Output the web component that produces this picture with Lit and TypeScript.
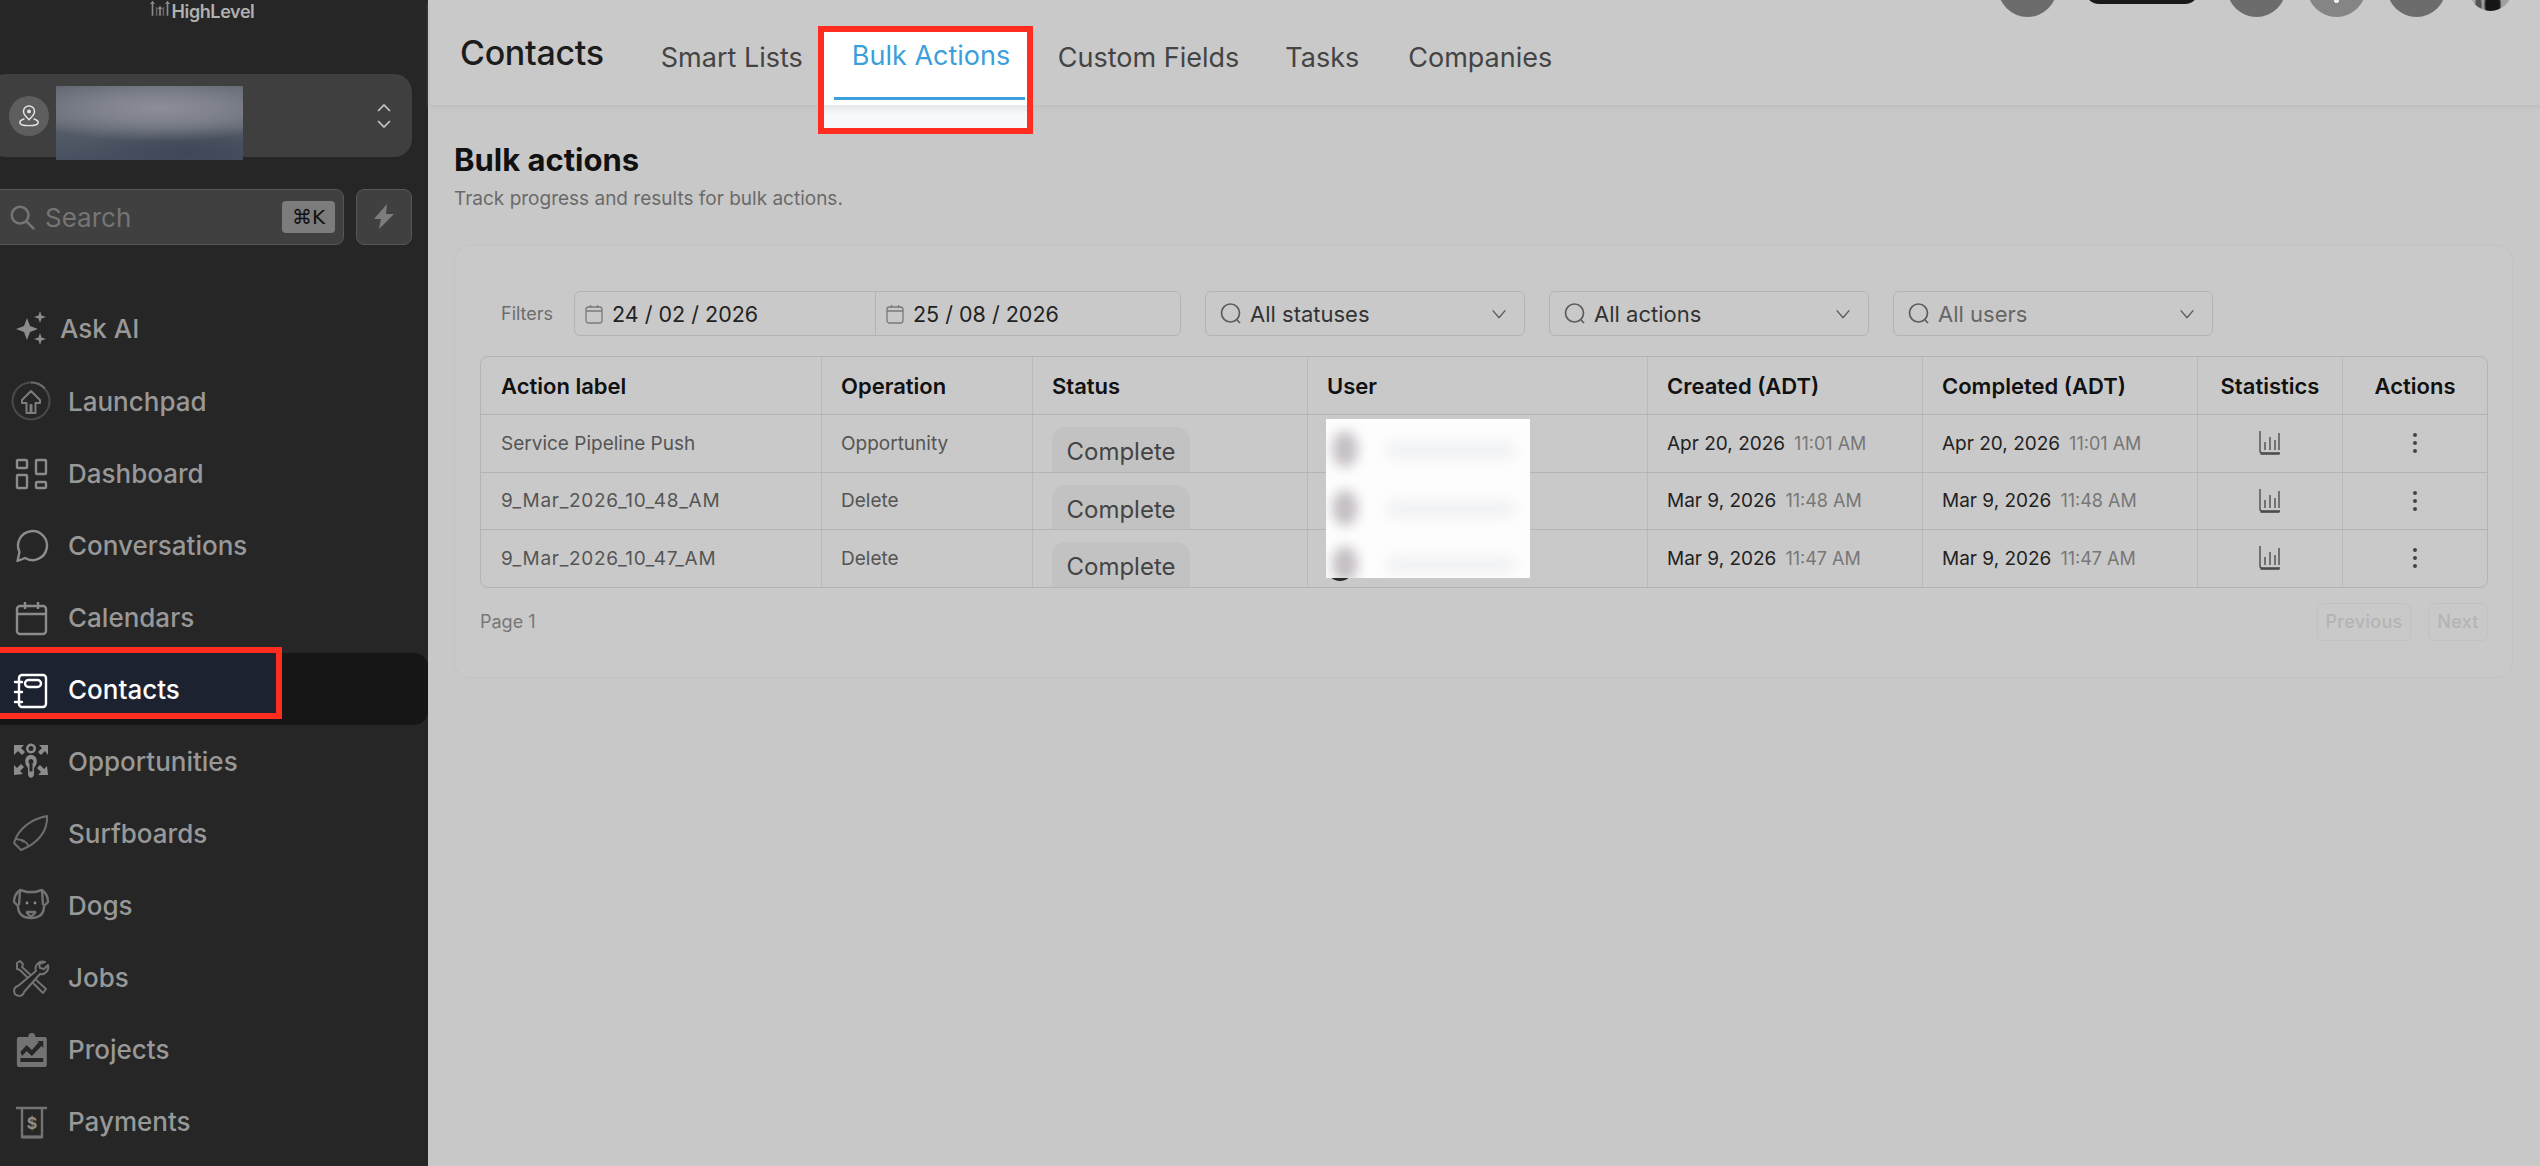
import { LitElement, html, css, svg } from "lit";
import { customElement } from "lit/decorators.js";

const icons: Record<string, unknown> = {
  launch: svg`<circle cx="18" cy="18" r="18.500" fill="none" stroke="#4a4a4a" stroke-width="2"/><path d="M18 -0.500a18.500 18.500 0 0 1 14 6" fill="none" stroke="#6a6a6a" stroke-width="2"/><path d="M18 8l-9 9v3h4.500v10h4v-8h1v8h4V20H27v-3z" fill="none" stroke="#7d7d7d" stroke-width="2" stroke-linejoin="round"/>`,
  dash: svg`<g fill="none" stroke="#8c8c8c" stroke-width="2.400"><rect x="4" y="5" width="10" height="8" rx="1"/><rect x="23" y="5" width="10" height="14" rx="1"/><rect x="4" y="20" width="10" height="13" rx="1"/><rect x="23" y="27" width="10" height="6" rx="1"/></g>`,
  chat: svg`<path d="M4.500 34L6.500 25A14.500 14.500 0 1 1 12 31z" fill="none" stroke="#8c8c8c" stroke-width="2.400" stroke-linejoin="round"/>`,
  cal: svg`<g fill="none" stroke="#8c8c8c" stroke-width="2.400"><rect x="4" y="7" width="29" height="28" rx="3"/><path d="M4 15h29M12 3v7M25 3v7"/></g>`,
  contacts: svg`<g fill="none" stroke="#fff" stroke-width="2.400" stroke-linecap="round" stroke-linejoin="round"><rect x="6" y="4" width="27" height="32" rx="3"/><rect x="12" y="9" width="16" height="7" rx="3.500"/><path d="M2 11h7M2 21h7M2 31h7"/></g>`,
  opp: svg`<g fill="#8c8c8c"><path d="M1 3h10l-3 3 4 4-3 3-4-4-4 4zM35 3v10l-3-4-4 4-3-3 4-4-3-3zM1 33V23l3 3 4-4 3 3-4 4 3 3zM35 33H25l3-3-4-4 3-3 4 4 3-3z" transform="translate(0 -1)"/><path d="M18 0.500a5 5 0 1 0 .01 0zm0 2.500a2.500 2.500 0 1 1-.01 0zM18 12c-5 0-7 5-5 10l2 3v6c0 5 6 5 6 0v-6l2-3c2-5 0-10-5-10zm0 4a2.500 2.500 0 0 1 1.500 4.500v8h-3v-8a2.500 2.500 0 0 1 1.500-4.500z" fill-rule="evenodd"/></g>`,
  surf: svg`<g fill="none" stroke="#6e6e6e" stroke-width="2" stroke-linejoin="round"><path d="M8 35L1 28C5 14 18 4 34 1c1 14-8 27-26 34z"/><path d="M3 24c8 1 11 3 13 8"/></g><circle cx="10" cy="26" r="1.500" fill="#6e6e6e"/>`,
  dog: svg`<g fill="none" stroke="#737373" stroke-width="2.400" stroke-linejoin="round"><path d="M7 3l7 2h8l7-2c4 3 6 8 6 12l-4 4c0 8-5 12-13 12S5 27 5 19l-4-4c0-4 2-9 6-12z"/><path d="M7 3l-1 15M29 3l1 15"/><path d="M14 25h8v1l-4 4-4-4z"/></g><circle cx="14" cy="16" r="1.400" fill="#8c8c8c"/><circle cx="22" cy="16" r="1.400" fill="#8c8c8c"/>`,
  jobs: svg`<g fill="none" stroke="#737373" stroke-width="2" stroke-linejoin="round"><path d="M4 4l3-2 3 3-1 3 24 22-3 4L7 11l-3-1z"/><path d="M32 3a7 7 0 0 0-9 9L5 27a5 5 0 1 0 6 6l16-18a7 7 0 0 0 8-9l-4 4-4-1-1-4z" fill="#262626"/></g>`,
  proj: svg`<path fill-rule="evenodd" fill="#737373" transform="translate(3 1) scale(.88 1)" d="M3 5h11a4 4 0 0 1 8 0h11a2 2 0 0 1 2 2v26a2 2 0 0 1-2 2H3a2 2 0 0 1-2-2V7a2 2 0 0 1 2-2zM5 26v4h26v-4zM5 20l7-7 6 5 8-8-2-1h7v7l-2-2-11 10-6-5-5 5z"/>`,
  pay: svg`<g fill="none" stroke="#737373" stroke-width="2.400"><path d="M3 5h31M9 5v29h20V5"/><path d="M9 34h20" stroke-width="3"/></g><text x="19" y="26" text-anchor="middle" font-family="Inter, sans-serif" font-size="16" font-weight="700" fill="#8c8c8c">$</text>`,
};

const navItems = [
  { label: "Launchpad", icon: "launch" },
  { label: "Dashboard", icon: "dash" },
  { label: "Conversations", icon: "chat" },
  { label: "Calendars", icon: "cal" },
  { label: "Contacts", icon: "contacts", active: true },
  { label: "Opportunities", icon: "opp" },
  { label: "Surfboards", icon: "surf" },
  { label: "Dogs", icon: "dog" },
  { label: "Jobs", icon: "jobs" },
  { label: "Projects", icon: "proj" },
  { label: "Payments", icon: "pay" },
];

const rows = [
  { label: "Service Pipeline Push", op: "Opportunity", date: "Apr 20, 2026", time: "11:01 AM" },
  { label: "9_Mar_2026_10_48_AM", op: "Delete", date: "Mar 9, 2026", time: "11:48 AM" },
  { label: "9_Mar_2026_10_47_AM", op: "Delete", date: "Mar 9, 2026", time: "11:47 AM" },
];

const searchIcon = html`<svg class="q" viewBox="0 0 24 24" fill="none" stroke="#5c5c5c" stroke-width="1.700"><circle cx="11.500" cy="11" r="9"/><path d="M18 18l3 3"/></svg>`;
const chevron = html`<svg class="chev" viewBox="0 0 20 12" fill="none" stroke="#5c5c5c" stroke-width="1.600"><path d="M3 2l7 8 7-8"/></svg>`;
const calIcon = html`<svg class="cal" viewBox="0 0 18 20" fill="none" stroke="#7a7a7a" stroke-width="1.300"><rect x="1" y="3" width="16" height="16" rx="2.500"/><path d="M1 7h16M5.500 1v3M12.500 1v3"/></svg>`;

@customElement("app-root")
export class AppRoot extends LitElement {
  static styles = css`
    :host {
      display: flex;
      width: 2540px;
      height: 1166px;
      overflow: hidden;
      background: #c8c8c8;
      font-family: Inter, "Liberation Sans", sans-serif;
    }
    .side {
      width: 428px;
      flex: none;
      background: #262626;
      display: flex;
      flex-direction: column;
      overflow: hidden;
    }
    .logo {
      height: 74px;
      display: flex;
      justify-content: center;
      align-items: flex-start;
      gap: 2px;
      padding-right: 24px;
      font-size: 18px;
      line-height: 23px;
      font-weight: 600;
      letter-spacing: -0.4px;
      color: #b0b0b0;
    }
    .logo svg { width: 20px; height: 18px; }
    .loc {
      height: 83px;
      margin-left: -12px;
      margin-right: 16px;
      border-radius: 18px;
      background: #3f3f3f;
      display: flex;
      align-items: center;
      position: relative;
      padding-left: 21px;
    }
    .pin {
      width: 40px;
      height: 40px;
      border-radius: 50%;
      background: #5e5e5e;
      display: grid;
      place-items: center;
    }
    .pin svg { width: 22px; height: 22px; }
    .blur {
      position: absolute;
      left: 68px;
      top: 12px;
      width: 187px;
      height: 74px;
      background:
        radial-gradient(ellipse 80% 45% at 55% 30%, #8b8e96 0%, #7f828b 40%, transparent 100%),
        radial-gradient(ellipse 60% 40% at 70% 90%, #3f4858 0%, transparent 100%),
        linear-gradient(180deg, #5f646f 0%, #666a75 40%, #535a67 65%, #475060 100%);
    }
    .updown { margin-left: auto; margin-right: 20px; width: 16px; height: 26px; }
    .search-row {
      display: flex;
      gap: 12px;
      margin: 32px 16px 0 -12px;
      height: 56px;
    }
    .search {
      flex: 1;
      border: 1px solid #565656;
      border-radius: 8px;
      background: #404040;
      display: flex;
      align-items: center;
      padding-left: 20px;
      gap: 10px;
      font-size: 26px;
      color: #757575;
    }
    .search svg { width: 26px; height: 26px; }
    kbd {
      margin-left: auto;
      margin-right: 8px;
      width: 53px;
      height: 32px;
      border-radius: 4px;
      background: #7c7c7c;
      color: #111;
      font: 20px "DejaVu Sans", sans-serif;
      display: grid;
      place-items: center;
    }
    .bolt {
      width: 56px;
      flex: none;
      box-sizing: border-box;
      border: 1px solid #565656;
      border-radius: 8px;
      background: #404040;
      display: grid;
      place-items: center;
    }
    .bolt svg { width: 24px; height: 26px; }
    .ask {
      margin-top: 63px;
      height: 40px;
      display: flex;
      align-items: center;
      padding-left: 13px;
      gap: 13px;
      font-size: 26px;
      font-weight: 500;
      color: #989898;
    }
    .ask svg { width: 34px; height: 34px; }
    .nav { margin-top: 17px; display: flex; flex-direction: column; }
    .item {
      height: 72px;
      display: flex;
      align-items: center;
      padding-left: 13px;
      gap: 19px;
      font-size: 26px;
      font-weight: 500;
      color: #989898;
      position: relative;
      border-radius: 0 14px 14px 0;
    }
    .item svg { width: 36px; height: 36px; flex: none; overflow: visible; }
    .item.active { background: #161616; color: #fff; }
    .item.active::before {
      content: "";
      position: absolute;
      left: -6px;
      top: 0;
      width: 282px;
      height: 60px;
      background: #1c2230;
    }
    .item span, .item svg { position: relative; z-index: 1; }
    .side-mark {
      position: absolute;
      left: -6px;
      top: -6px;
      width: 288px;
      height: 72px;
      box-sizing: border-box;
      border: 6px solid #ff2d1f;
      z-index: 2;
    }

    .main { flex: 1; min-width: 0; display: flex; flex-direction: column; margin-left: 2px; }
    .top {
      height: 105px;
      flex: none;
      display: flex;
      align-items: flex-start;
      background: #c9c9c9;
      box-shadow: 0 2px 4px #bdbdbd;
      padding-left: 30px;
      position: relative;
    }
    .title {
      font-size: 34px;
      font-weight: 500;
      line-height: 44px;
      margin-top: 31px;
      color: #1c1c1c;
      letter-spacing: -0.3px;
    }
    .tabs { display: flex; margin-left: 57px; }
    .tab {
      margin: 41px 49px 0 0;
      font-size: 27px;
      line-height: 34px;
      color: #444;
      white-space: nowrap;
    }
    .tab.smart { margin-right: 31px; }
    .tab.custom { margin-right: 46px; }
    .tab.on {
      position: relative;
      margin: 32px 33px 0 0;
      width: 191px;
      height: 73px;
      box-sizing: border-box;
      padding: 6px 0 0 18px;
      line-height: 36px;
      color: #3b9fdb;
    }
    .tab.on::after {
      content: "";
      position: absolute;
      left: 0;
      right: 0;
      top: 65px;
      height: 3px;
      background: #3b9fdb;
      z-index: 1;
    }
    .tab-mark {
      position: absolute;
      left: -16px;
      top: -6px;
      width: 215px;
      height: 108px;
      box-sizing: border-box;
      border: 6px solid #ff2d1f;
      z-index: 2;
    }
    .tab-fill {
      position: absolute;
      left: -10px;
      top: 0;
      width: 203px;
      height: 96px;
      background: linear-gradient(#fff 0 73px, #e4e6e9 73px, #f7f8fa 82px);
    }
    .tab.on b { position: relative; font-weight: 400; z-index: 1; }
    .cluster {
      margin-left: auto;
      margin-right: 28px;
      display: flex;
      align-items: flex-end;
      height: 17px;
    }
    .dot { width: 59px; height: 59px; border-radius: 50%; background: #6c6c6c; flex: none; }
    .dot.light { background: radial-gradient(circle 3px at 50% 42px, #eee 90%, transparent), #858585; }
    .dot + .dot { margin-left: 21px; }
    .pill {
      width: 114px;
      height: 30px;
      border-radius: 14px;
      background: #1a1a1a;
      margin: 0 28px;
      align-self: flex-start;
      transform: translateY(-26px);
      flex: none;
    }
    .photo {
      width: 43px;
      height: 43px;
      border-radius: 50%;
      margin-left: 23px;
      margin-bottom: 6px;
      flex: none;
      background:
        radial-gradient(ellipse 9px 16px at 55% 85%, #151515 75%, transparent),
        radial-gradient(ellipse 4px 10px at 22% 85%, #555 60%, transparent),
        linear-gradient(100deg, #a8a8a8 30%, #8a8a8a 55%, #a0a0a0 78%);
    }

    .content { padding: 37px 27px 0 24px; }
    h1 { margin: 0; font-size: 31px; line-height: 36px; font-weight: 700; color: #111; }
    .sub { margin-top: 9px; font-size: 19px; line-height: 24px; color: #6a6a6a; }
    .card {
      margin-top: 34px;
      height: 433px;
      box-sizing: border-box;
      border: 1px solid #c3c3c3;
      border-radius: 16px;
      background: #c9c9c9;
      padding: 45px 24px 0 25px;
    }
    .filters { display: flex; align-items: center; height: 45px; }
    .filters label { font-size: 18px; color: #6d6d6d; margin-left: 21px; width: 73px; }
    .range {
      width: 607px;
      height: 45px;
      box-sizing: border-box;
      border: 1px solid #b4b4b4;
      border-radius: 6px;
      display: grid;
      grid-template-columns: 300px 1fr;
    }
    .range div {
      display: flex;
      align-items: center;
      gap: 9px;
      padding-left: 10px;
      font-size: 21.500px;
      color: #222;
    }
    .range div + div { border-left: 1px solid #b4b4b4; }
    .cal { width: 18px; height: 20px; }
    .select {
      width: 320px;
      height: 45px;
      box-sizing: border-box;
      border: 1px solid #b4b4b4;
      border-radius: 6px;
      margin-left: 24px;
      display: flex;
      align-items: center;
      padding: 0 16px 0 13px;
      gap: 7px;
      font-size: 22px;
      color: #333;
    }
    .select.dim { color: #666; }
    .q { width: 24px; height: 24px; flex: none; }
    .chev { width: 18px; height: 12px; margin-left: auto; }

    .table {
      margin-top: 20px;
      border: 1px solid #b4b4b4;
      border-radius: 8px;
      overflow: hidden;
      position: relative;
    }
    .tr {
      display: grid;
      grid-template-columns: 340px 211px 275px 340px 275px 275px 145px 145px;
      height: 57.500px;
      border-top: 1px solid #b4b4b4;
      box-sizing: border-box;
    }
    .tr.head { border-top: 0; height: 57px; }
    .tr > div {
      display: flex;
      align-items: center;
      padding-left: 19px;
      border-left: 1px solid #b9b9b9;
      overflow: hidden;
      font-size: 19px;
      color: #555;
      white-space: nowrap;
    }
    .tr > div:first-child { border-left: 0; padding-left: 20px; }
    .tr > div.slug { letter-spacing: 0.7px; }
    .tr.head > div { font-size: 22px; font-weight: 600; color: #111; }
    .tr > div.mid { justify-content: center; padding-left: 0; }
    .badge {
      align-self: flex-start;
      margin-top: 12px;
      height: 60px;
      width: 138px;
      border-radius: 14px;
      background: #c2c2c2;
      text-align: center;
      font-size: 24px;
      line-height: 50px;
      color: #444;
    }
    .tr .when { color: #222; gap: 9px; }
    .when small { font-size: 18px; color: #777; }
    .avatar {
      width: 26px;
      height: 26px;
      border-radius: 50%;
      background: #2a2a2a;
      margin-top: 25px;
      align-self: flex-start;
    }
    .stat { width: 22px; height: 24px; }
    .more { width: 6px; height: 22px; }
    .redact {
      position: absolute;
      left: 845px;
      top: 62px;
      width: 204px;
      height: 159px;
      background: #fdfdfd;
      overflow: hidden;
    }
    .redact i {
      position: absolute;
      display: block;
      filter: blur(6px);
    }
    .redact .face { left: 6px; width: 26px; height: 36px; border-radius: 50%; background: #c6c0c5; }
    .redact .line { left: 62px; width: 126px; height: 16px; background: #f0f1f3; }
    .redact .r1.face { top: 12px; }
    .redact .r1.line { top: 23px; }
    .redact .r2.face { top: 71px; }
    .redact .r2.line { top: 82px; }
    .redact .r3.face { top: 127px; }
    .redact .r3.line { top: 138px; }

    .foot { display: flex; align-items: center; margin-top: 15px; height: 38px; font-size: 18px; color: #777; }
    .btn {
      height: 38px;
      width: 60px;
      box-sizing: border-box;
      border: 1px solid #c2c2c2;
      border-radius: 6px;
      text-align: center;
      line-height: 36px;
      font-size: 18px;
      font-weight: 500;
      color: #b4b4b4;
      letter-spacing: 0.3px;
    }
    .btn.prev { width: 94px; margin-left: auto; margin-right: 17px; }
  `;

  render() {
    return html`
      <aside class="side">
        <div class="logo">
          <svg viewBox="0 0 24 20" fill="#8a8a8a"><path d="M3 0l3 4H4v14H2V4H0zM21 0l3 4h-2v14h-2V4h-2zM12 6l3 4h-2v8h-2v-8H9z"/><path d="M7 8h2v10H7zM15 8h2v10h-2z" opacity=".6"/></svg>
          <span>HighLevel</span>
        </div>
        <div class="loc">
          <div class="pin">
            <svg viewBox="0 0 24 24" fill="none" stroke="#e4e4e4" stroke-width="1.600"><path d="M12 16c-3-3-6-5.500-6-9a6 6 0 0 1 12 0c0 3.500-3 6-6 9z"/><circle cx="12" cy="7" r="1.300" fill="#e4e4e4"/><path d="M7 15c-3 1-5 2.500-5 4 0 2 4 3.500 10 3.500s10-1.500 10-3.500c0-1.500-2-3-5-4"/></svg>
          </div>
          <div class="blur"></div>
          <svg class="updown" viewBox="0 0 16 26" fill="none" stroke="#c4c4c4" stroke-width="1.700"><path d="M2 8l6-6 6 6M2 18l6 6 6-6"/></svg>
        </div>
        <div class="search-row">
          <div class="search">
            <svg viewBox="0 0 28 28" fill="none" stroke="#757575" stroke-width="2.800"><circle cx="12" cy="12" r="9"/><path d="M18.500 18.500L27 27"/></svg>
            <span>Search</span>
            <kbd>⌘K</kbd>
          </div>
          <div class="bolt">
            <svg viewBox="0 0 24 26" fill="#7d7d7d"><path d="M15 0L2 15h7l-2 10 15-15h-8z"/></svg>
          </div>
        </div>
        <div class="ask">
          <svg viewBox="0 0 34 34" fill="#8c8c8c"><path d="M14 7l3 8 8 3-8 3-3 8-3-8-8-3 8-3zM27 0l1.500 4.500L33 6l-4.500 1.500L27 12l-1.500-4.500L21 6l4.500-1.500zM27 22l1.500 4.500L33 28l-4.500 1.500L27 34l-1.500-4.500L21 28l4.500-1.500z"/></svg>
          <span>Ask AI</span>
        </div>
        <nav class="nav">
          ${navItems.map(
            (n) => html`
              <div class="item ${n.active ? "active" : ""}">
                ${n.active ? html`<div class="side-mark"></div>` : ""}
                <svg viewBox="0 0 36 36">${icons[n.icon]}</svg>
                <span>${n.label}</span>
              </div>
            `,
          )}
        </nav>
      </aside>
      <main class="main">
        <header class="top">
          <div class="title">Contacts</div>
          <div class="tabs">
            <div class="tab smart">Smart Lists</div>
            <div class="tab on">
              <div class="tab-fill"></div>
              <b>Bulk Actions</b>
              <div class="tab-mark"></div>
            </div>
            <div class="tab custom">Custom Fields</div>
            <div class="tab">Tasks</div>
            <div class="tab">Companies</div>
          </div>
          <div class="cluster">
            <div class="dot"></div>
            <div class="pill"></div>
            <div class="dot"></div>
            <div class="dot light"></div>
            <div class="dot"></div>
            <div class="photo"></div>
          </div>
        </header>
        <section class="content">
          <h1>Bulk actions</h1>
          <div class="sub">Track progress and results for bulk actions.</div>
          <div class="card">
            <div class="filters">
              <label>Filters</label>
              <div class="range">
                <div>${calIcon}24 / 02 / 2026</div>
                <div>${calIcon}25 / 08 / 2026</div>
              </div>
              <div class="select">${searchIcon}All statuses${chevron}</div>
              <div class="select">${searchIcon}All actions${chevron}</div>
              <div class="select dim">${searchIcon}All users${chevron}</div>
            </div>
            <div class="table">
              <div class="tr head">
                <div>Action label</div>
                <div>Operation</div>
                <div>Status</div>
                <div>User</div>
                <div>Created (ADT)</div>
                <div>Completed (ADT)</div>
                <div class="mid">Statistics</div>
                <div class="mid">Actions</div>
              </div>
              ${rows.map(
                (r) => html`
                  <div class="tr">
                    <div class="${r.label.includes("_") ? "slug" : ""}">${r.label}</div>
                    <div>${r.op}</div>
                    <div><span class="badge">Complete</span></div>
                    <div><span class="avatar"></span></div>
                    <div class="when">${r.date}<small>${r.time}</small></div>
                    <div class="when">${r.date}<small>${r.time}</small></div>
                    <div class="mid">
                      <svg class="stat" viewBox="0 0 22 24" fill="none" stroke="#444" stroke-width="1.300"><path d="M1 0v20a2 2 0 0 0 2 2h18"/><path d="M1.500 23h19" stroke-width="1.600"/><path d="M6 11v8M11 6v13M16 9v10M20 2v17"/></svg>
                    </div>
                    <div class="mid">
                      <svg class="more" viewBox="0 0 6 22" fill="#444"><circle cx="3" cy="3" r="2"/><circle cx="3" cy="11" r="2"/><circle cx="3" cy="19" r="2"/></svg>
                    </div>
                  </div>
                `,
              )}
              <div class="redact">
                <i class="face r1"></i>
                <i class="line r1"></i>
                <i class="face r2"></i>
                <i class="line r2"></i>
                <i class="face r3"></i>
                <i class="line r3"></i>
              </div>
            </div>
            <div class="foot">
              <span>Page 1</span>
              <span class="btn prev">Previous</span>
              <span class="btn">Next</span>
            </div>
          </div>
        </section>
      </main>
    `;
  }
}
